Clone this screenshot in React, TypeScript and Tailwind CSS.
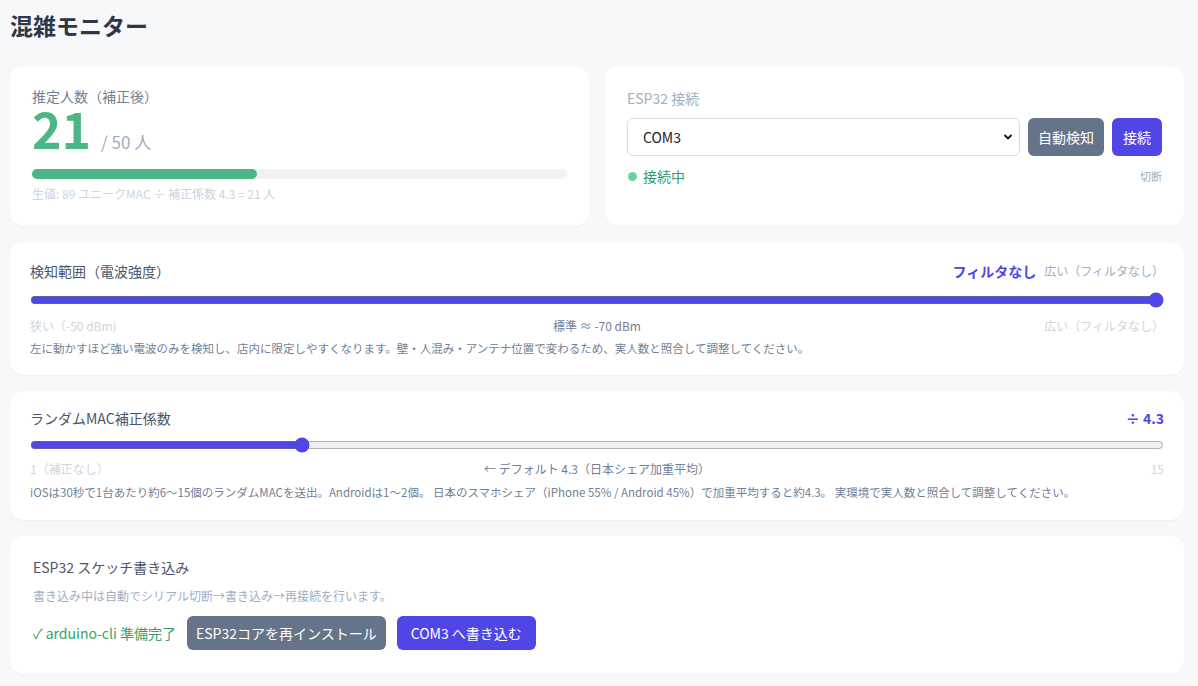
import React from "react";

const font = { fontFamily: '"Noto Sans CJK JP", "Noto Sans", sans-serif' };

export default function App() {
  return (
    <div className="min-h-[686px] bg-[#f7f8fa] pl-[10px] pr-[14px] pt-[8px] pb-4" style={font}>
      <h1 className="text-[23px] font-bold leading-[34px] text-[#2d3748]">混雑モニター</h1>
      <div className="mt-[24px] flex flex-col gap-4">
        <div className="flex gap-4">
          <div className="flex-1 rounded-[14px] bg-white p-[22px] pb-[24px] shadow-[0_1px_2px_rgba(0,0,0,0.04)]">
            <div className="text-sm leading-4 text-[#718096]">推定人数（補正後）</div>
            <div className="flex items-baseline gap-[10px]">
              <span className="text-[50px] font-bold leading-[46px] text-[#4cb782]">21</span>
              <span className="text-[17px] leading-[20px] text-[#a0aec0]">/ 50 人</span>
            </div>
            <div className="mt-[17px] h-[10px] rounded-full bg-[#f1f2f4]">
              <div className="h-full rounded-full bg-[#4cb782]" style={{ width: "42%" }} />
            </div>
            <div className="mt-[7px] text-[12px] leading-4 text-[#cbd5e0]">生値: 89 ユニークMAC ÷ 補正係数 4.3 = 21 人</div>
          </div>
          <div className="flex-1 rounded-[14px] bg-white p-[22px] shadow-[0_1px_2px_rgba(0,0,0,0.04)]">
            <div className="text-sm leading-5 text-[#a0aec0]">ESP32 接続</div>
            <div className="mt-[10px] flex gap-2">
              <div className="relative flex-1">
                <select className="h-[38px] w-full appearance-none rounded-[6px] border border-[#d9dce1] bg-white pl-[15px] text-sm text-[#1a202c] outline-none">
                  <option>COM3</option>
                </select>
                <svg className="pointer-events-none absolute right-[7px] top-[15px]" width="10" height="8" viewBox="0 0 10 8">
                  <path d="M1.5 2 L5 5.5 L8.5 2" stroke="#111" strokeWidth="1.8" fill="none" />
                </svg>
              </div>
              <button className="h-[38px] rounded-[6px] bg-[#667489] px-[10px] text-sm text-white">自動検知</button>
              <button className="h-[38px] rounded-[6px] bg-[#4f46e5] px-[11px] text-sm text-white">接続</button>
            </div>
            <div className="mt-[10px] flex items-center justify-between">
              <div className="flex items-center gap-[6px] pl-[1px]">
                <span className="h-[9px] w-[9px] rounded-full bg-[#68d39c]" />
                <span className="text-sm text-[#3a9a73]">接続中</span>
              </div>
              <span className="text-[11px] text-[#a0aec0]">切断</span>
            </div>
          </div>
        </div>

        <div className="rounded-[14px] bg-white px-[20px] pt-[19px] pb-[19px] shadow-[0_1px_2px_rgba(0,0,0,0.04)]">
          <div className="flex items-center justify-between">
            <span className="text-sm leading-5 text-[#4a5568]">検知範囲（電波強度）</span>
            <div className="flex items-center gap-[8px]">
              <span className="text-sm font-bold text-[#4f46e5]">フィルタなし</span>
              <span className="text-[12px] text-[#a0aec0]">広い（フィルタなし）</span>
            </div>
          </div>
          <input type="range" min={-90} max={-50} defaultValue={-50} className="mt-[11px] m-0 block h-[16px] w-full accent-[#4f46e5]" readOnly />
          <div className="mt-[10px] flex justify-between text-[12px] leading-4">
            <span className="w-[200px] text-[#d1d5db]">狭い（-50 dBm)</span>
            <span className="text-[#718096]">標準 ≈ -70 dBm</span>
            <span className="w-[200px] text-right text-[#d1d5db]">広い（フィルタなし）</span>
          </div>
          <div className="mt-[6px] text-[11.5px] leading-4 text-[#718096]">左に動かすほど強い電波のみを検知し、店内に限定しやすくなります。壁・人混み・アンテナ位置で変わるため、実人数と照合して調整してください。</div>
        </div>

        <div className="rounded-[14px] bg-white px-[20px] pt-[17px] pb-[20px] shadow-[0_1px_2px_rgba(0,0,0,0.04)]">
          <div className="flex items-center justify-between">
            <span className="text-sm leading-5 text-[#4a5568]">ランダムMAC補正係数</span>
            <span className="text-sm font-bold text-[#4f46e5]">÷ 4.3</span>
          </div>
          <input type="range" min={1} max={15} step={0.1} defaultValue={4.3} className="mt-[9px] m-0 block h-[16px] w-full accent-[#4f46e5]" readOnly />
          <div className="mt-[8px] flex justify-between text-[12px] leading-4">
            <span className="w-[200px] text-[#d1d5db]">1（補正なし）</span>
            <span className="text-[#718096]">← デフォルト 4.3（日本シェア加重平均）</span>
            <span className="w-[200px] text-right text-[#d1d5db]">15</span>
          </div>
          <div className="mt-[7px] text-[11.5px] leading-4 text-[#718096]">iOSは30秒で1台あたり約6〜15個のランダムMACを送出。Androidは1〜2個。 日本のスマホシェア（iPhone 55% / Android 45%）で加重平均すると約4.3。 実環境で実人数と照合して調整してください。</div>
        </div>

        <div className="rounded-[14px] bg-white px-[23px] pt-[21px] pb-[24px] shadow-[0_1px_2px_rgba(0,0,0,0.04)]">
          <div className="text-sm leading-5 text-[#4a5568]">ESP32 スケッチ書き込み</div>
          <div className="mt-[11px] text-[12px] leading-4 text-[#a0aec0]">書き込み中は自動でシリアル切断→書き込み→再接続を行います。</div>
          <div className="mt-[12px] flex items-center gap-[11px]">
            <span className="text-sm text-[#38a169]">✓ arduino-cli 準備完了</span>
            <button className="h-[34px] rounded-[6px] bg-[#667489] px-[9px] text-sm text-white">ESP32コアを再インストール</button>
            <button className="h-[34px] rounded-[6px] bg-[#4f46e5] px-[14px] text-sm text-white">COM3 へ書き込む</button>
          </div>
        </div>
      </div>
    </div>
  );
}
